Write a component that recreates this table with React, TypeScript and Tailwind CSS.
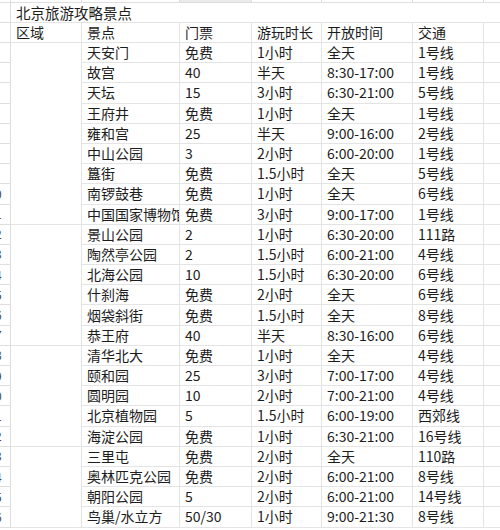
import React from "react";

const rows = [
  ["天安门", "免费", "1小时", "全天", "1号线"],
  ["故宫", "40", "半天", "8:30-17:00", "1号线"],
  ["天坛", "15", "3小时", "6:30-21:00", "5号线"],
  ["王府井", "免费", "1小时", "全天", "1号线"],
  ["雍和宫", "25", "半天", "9:00-16:00", "2号线"],
  ["中山公园", "3", "2小时", "6:00-20:00", "1号线"],
  ["簋街", "免费", "1.5小时", "全天", "5号线"],
  ["南锣鼓巷", "免费", "1小时", "全天", "6号线"],
  ["中国国家博物馆", "免费", "3小时", "9:00-17:00", "1号线"],
  ["景山公园", "2", "1小时", "6:30-20:00", "111路"],
  ["陶然亭公园", "2", "1.5小时", "6:00-21:00", "4号线"],
  ["北海公园", "10", "1.5小时", "6:30-20:00", "6号线"],
  ["什刹海", "免费", "2小时", "全天", "6号线"],
  ["烟袋斜街", "免费", "1.5小时", "全天", "8号线"],
  ["恭王府", "40", "半天", "8:30-16:00", "6号线"],
  ["清华北大", "免费", "1小时", "全天", "4号线"],
  ["颐和园", "25", "3小时", "7:00-17:00", "4号线"],
  ["圆明园", "10", "2小时", "7:00-21:00", "4号线"],
  ["北京植物园", "5", "1.5小时", "6:00-19:00", "西郊线"],
  ["海淀公园", "免费", "1小时", "6:30-21:00", "16号线"],
  ["三里屯", "免费", "2小时", "全天", "110路"],
  ["奥林匹克公园", "免费", "2小时", "6:00-21:00", "8号线"],
  ["朝阳公园", "5", "2小时", "6:00-21:00", "14号线"],
  ["鸟巢/水立方", "50/30", "1小时", "9:00-21:30", "8号线"],
];

// widths of the columns after 区域
const colW = ["w-[98px]", "w-[72px]", "w-[70px]", "w-[91px]", "w-[71px]"];

function RowNum({ n, h }: { n?: number; h: string }) {
  return (
    <div className={`${h} w-[11px] shrink-0 overflow-hidden border-r border-b border-[#dedede]`}>
      <div className="-ml-[20px] w-[30px] h-full flex items-center justify-center text-[12px] text-[#444]">
        {n}
      </div>
    </div>
  );
}

function Cell({ w, text, h = "h-[20.2px]" }: { w: string; text?: string; h?: string }) {
  return (
    <div className={`${w} ${h} shrink-0 flex items-center overflow-hidden whitespace-nowrap border-r border-b border-[#e4e4e4] pl-[5px]`}>
      {text}
    </div>
  );
}

export default function App() {
  const regions = ["h-[181.8px]", "h-[121.2px]", "h-[101px]", "h-[80.8px]"];
  return (
    <div className="w-[500px] h-[530px] overflow-hidden bg-white text-[14px] text-[#1c1c1c] font-['Noto_Sans_CJK_SC','Liberation_Sans',sans-serif]">
      {/* column header strip, mostly scrolled away */}
      <div className="flex h-[3px]">
        <div className="w-[11px] shrink-0 border-r border-b border-[#dedede]" />
        <div className="w-[71px] shrink-0 border-r border-b border-[#dedede]" />
        <div className="w-[98px] shrink-0 border-r border-b border-[#dedede]" />
        <div className="w-[72px] shrink-0 border-r border-b border-[#dedede] bg-[#ebebeb]" />
        <div className="w-[70px] shrink-0 border-r border-b border-[#dedede]" />
        <div className="w-[91px] shrink-0 border-r border-b border-[#dedede]" />
        <div className="w-[71px] shrink-0 border-r border-b border-[#dedede]" />
        <div className="flex-1 border-b border-[#dedede]" />
      </div>

      {/* title */}
      <div className="flex">
        <RowNum n={1} h="h-[20px]" />
        <div className="flex-1 h-[20px] flex items-center pl-[5px] border-b border-[#e4e4e4] text-[14.5px]">
          北京旅游攻略景点
        </div>
      </div>

      {/* header */}
      <div className="flex">
        <RowNum n={2} h="h-[20px]" />
        <Cell w="w-[71px]" h="h-[20px]" text="区域" />
        {["景点", "门票", "游玩时长", "开放时间", "交通"].map((t, i) => (
          <Cell key={t} w={colW[i]} h="h-[20px]" text={t} />
        ))}
        <div className="flex-1 h-[20px] border-b border-[#e4e4e4]" />
      </div>

      {/* body */}
      <div className="flex">
        <div className="flex flex-col">
          {rows.map((_, i) => (
            <RowNum key={i} n={i + 3} h="h-[20.2px]" />
          ))}
        </div>
        <div className="flex flex-col">
          {regions.map((h, i) => (
            <div key={i} className={`${h} w-[71px] border-r border-b border-[#e4e4e4]`} />
          ))}
        </div>
        <div className="flex flex-col flex-1">
          {rows.map((r, i) => (
            <div key={i} className="flex">
              {r.map((t, j) => (
                <Cell key={j} w={colW[j]} text={t} />
              ))}
              <div className="flex-1 h-[20.2px] border-b border-[#e4e4e4]" />
            </div>
          ))}
        </div>
      </div>
    </div>
  );
}
